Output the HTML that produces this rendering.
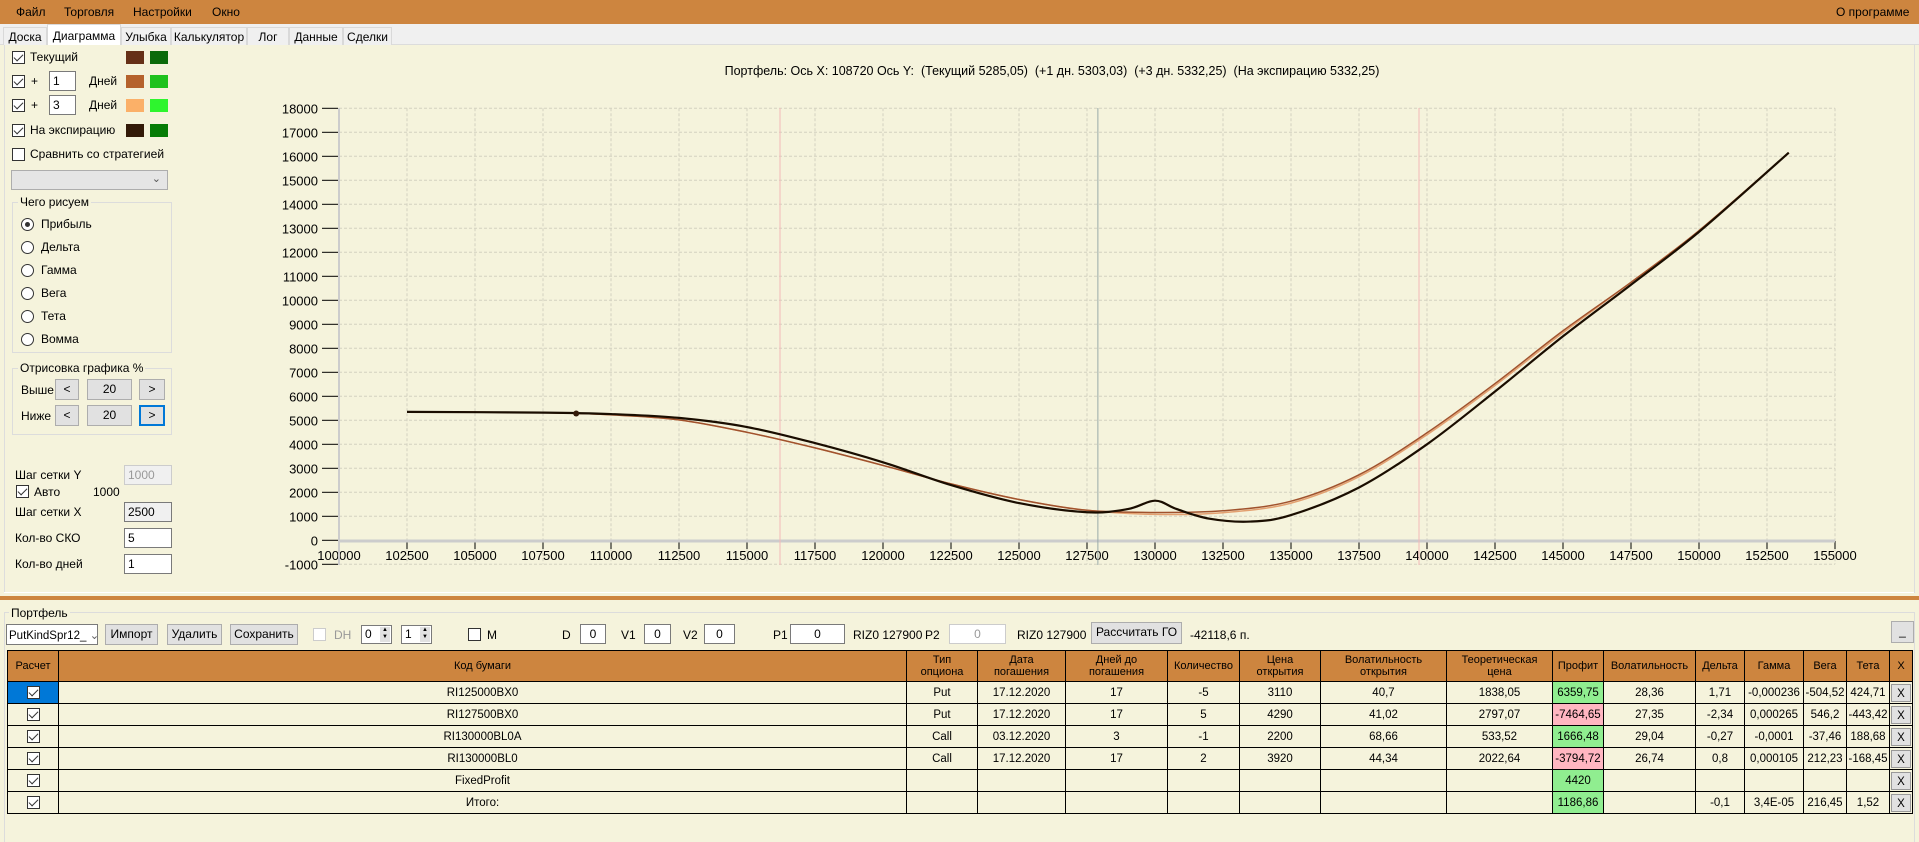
<!DOCTYPE html>
<html><head><meta charset="utf-8">
<style>
*{box-sizing:border-box}
body{margin:0;width:1919px;height:842px;overflow:hidden;background:#f5f3dc;font-family:"Liberation Sans",sans-serif;font-size:12px;color:#000;position:relative}
.a{position:absolute;white-space:nowrap}
.menu{left:0;top:0;width:1919px;height:24px;background:#cd853f}
.menu span{position:absolute;top:5px;font-size:12px}
.tabs{left:0;top:24px;width:1919px;height:21px;background:#f0f0f0;border-bottom:1px solid #dcdcdc}
.tab{position:absolute;top:3px;height:18px;border:1px solid #d9d9d9;border-bottom:none;background:#f0f0f0;font-size:12px;padding-top:2px;text-align:center}
.cb{position:absolute;width:13px;height:13px;border:1px solid #333;background:#fff}
.cb.c::after{content:"";position:absolute;left:3px;top:0px;width:4px;height:8px;border:solid #333;border-width:0 1.5px 1.5px 0;transform:rotate(45deg)}
.sw{position:absolute;width:18px;height:13px}
.tb{position:absolute;background:#fff;border:1px solid #7a7a7a;padding:2px 3px;font-size:12px}
.btn{position:absolute;background:#e1e1e1;border:1px solid #adadad;text-align:center;font-size:12px;line-height:19px}
.rad{position:absolute;width:13px;height:13px;border:1px solid #333;border-radius:50%;background:#fff}
.grp{position:absolute;border:1px solid #dcdcdc}
.grp>span{position:absolute;top:-8px;left:5px;background:#f5f3dc;padding:0 2px}
table{position:absolute;left:7px;top:650px;border-collapse:collapse;table-layout:fixed;font-size:11.5px}
td,th{border:1px solid #000;text-align:center;padding:0;overflow:hidden;white-space:nowrap}
th{background:#cd853f;font-weight:normal;height:31px;line-height:12px;font-size:11px}
td{height:22px;background:#f5f3dc}
.g{background:#90ee90}.p{background:#ffb6c1}
.x{background:#e1e1e1;border:1px solid #999;display:block;margin:1px;height:18px;line-height:18px}
.tcb{display:inline-block;width:13px;height:13px;border:1px solid #333;background:#fff;position:relative;vertical-align:middle}
.tcb::after{content:"";position:absolute;left:3px;top:0;width:4px;height:8px;border:solid #333;border-width:0 1.5px 1.5px 0;transform:rotate(45deg)}
</style></head><body>
<div class="a menu"><span style="left:16px">Файл</span><span style="left:64px">Торговля</span><span style="left:133px">Настройки</span><span style="left:212px">Окно</span><span style="left:1836px">О программе</span></div>
<div class="a tabs">
<div class="tab" style="left:3px;width:44px">Доска</div>
<div class="tab" style="left:47px;width:74px;top:0;height:21px;background:#fff;padding-top:4px">Диаграмма</div>
<div class="tab" style="left:121px;width:50px">Улыбка</div>
<div class="tab" style="left:171px;width:76px">Калькулятор</div>
<div class="tab" style="left:247px;width:42px">Лог</div>
<div class="tab" style="left:289px;width:54px">Данные</div>
<div class="tab" style="left:343px;width:49px">Сделки</div>
</div>
<div class="a" style="left:4px;top:45px;width:1px;height:548px;background:#ddd"></div>
<div class="a" style="left:4px;top:592px;width:1911px;height:1px;background:#fff"></div>
<div class="a" style="left:1914px;top:45px;width:1px;height:548px;background:#ddd"></div>
<div class="cb c" style="left:12px;top:51px"></div><div class="a" style="left:30px;top:50px">Текущий</div>
<div class="sw" style="left:126px;top:51px;background:#663018"></div><div class="sw" style="left:150px;top:51px;background:#0b6a0b"></div>
<div class="cb c" style="left:12px;top:75px"></div><div class="a" style="left:31px;top:74px">+</div>
<div class="tb" style="left:49px;top:71px;width:27px;height:20px">1</div><div class="a" style="left:89px;top:74px">Дней</div>
<div class="sw" style="left:126px;top:75px;background:#b5622c"></div><div class="sw" style="left:150px;top:75px;background:#1ec21e"></div>
<div class="cb c" style="left:12px;top:99px"></div><div class="a" style="left:31px;top:98px">+</div>
<div class="tb" style="left:49px;top:95px;width:27px;height:20px">3</div><div class="a" style="left:89px;top:98px">Дней</div>
<div class="sw" style="left:126px;top:99px;background:#fbb068"></div><div class="sw" style="left:150px;top:99px;background:#2ef52e"></div>
<div class="cb c" style="left:12px;top:124px"></div><div class="a" style="left:30px;top:123px">На экспирацию</div>
<div class="sw" style="left:126px;top:124px;background:#331a08"></div><div class="sw" style="left:150px;top:124px;background:#067c06"></div>
<div class="cb" style="left:12px;top:148px"></div><div class="a" style="left:30px;top:147px">Сравнить со стратегией</div>
<div class="a" style="left:11px;top:170px;width:157px;height:20px;background:#e5e5e5;border:1px solid #adadad"><span style="position:absolute;right:6px;top:1px;font-size:11px;color:#555">&#8964;</span></div>
<div class="grp" style="left:12px;top:202px;width:160px;height:151px"><span>Чего рисуем</span></div>
<div class="rad" style="left:21px;top:218px"><div style="position:absolute;left:3px;top:3px;width:5px;height:5px;border-radius:50%;background:#333"></div></div><div class="a" style="left:41px;top:217px">Прибыль</div>
<div class="rad" style="left:21px;top:241px"></div><div class="a" style="left:41px;top:240px">Дельта</div>
<div class="rad" style="left:21px;top:264px"></div><div class="a" style="left:41px;top:263px">Гамма</div>
<div class="rad" style="left:21px;top:287px"></div><div class="a" style="left:41px;top:286px">Вега</div>
<div class="rad" style="left:21px;top:310px"></div><div class="a" style="left:41px;top:309px">Тета</div>
<div class="rad" style="left:21px;top:333px"></div><div class="a" style="left:41px;top:332px">Вомма</div>
<div class="grp" style="left:12px;top:368px;width:160px;height:67px"><span>Отрисовка графика %</span></div>
<div class="a" style="left:21px;top:383px">Выше</div>
<div class="btn" style="left:55px;top:379px;width:24px;height:21px">&lt;</div>
<div class="btn" style="left:87px;top:379px;width:45px;height:21px">20</div>
<div class="btn" style="left:139px;top:379px;width:26px;height:21px">&gt;</div>
<div class="a" style="left:21px;top:409px">Ниже</div>
<div class="btn" style="left:55px;top:405px;width:24px;height:21px">&lt;</div>
<div class="btn" style="left:87px;top:405px;width:45px;height:21px">20</div>
<div class="btn" style="left:139px;top:405px;width:26px;height:21px;border:2px solid #0078d7;line-height:17px">&gt;</div>
<div class="a" style="left:15px;top:468px">Шаг сетки Y</div>
<div class="tb" style="left:124px;top:465px;width:48px;height:20px;background:#f0f0f0;border-color:#ccc;color:#999">1000</div>
<div class="cb c" style="left:16px;top:485px"></div><div class="a" style="left:34px;top:485px">Авто</div><div class="a" style="left:93px;top:485px">1000</div>
<div class="a" style="left:15px;top:505px">Шаг сетки X</div>
<div class="tb" style="left:124px;top:502px;width:48px;height:20px;background:#f0f0f0">2500</div>
<div class="a" style="left:15px;top:531px">Кол-во СКО</div>
<div class="tb" style="left:124px;top:528px;width:48px;height:20px">5</div>
<div class="a" style="left:15px;top:557px">Кол-во дней</div>
<div class="tb" style="left:124px;top:554px;width:48px;height:20px">1</div>
<div class="a" style="left:0;top:64px;width:2104px;text-align:center;font-size:12.5px">Портфель: Ось X: 108720 Ось Y: &nbsp;(Текущий 5285,05) &nbsp;(+1 дн. 5303,03) &nbsp;(+3 дн. 5332,25) &nbsp;(На экспирацию 5332,25)</div>
<svg class="a" style="left:0;top:0" width="1919" height="600" id="ch"></svg>
<div class="a" style="left:0;top:596px;width:1919px;height:4px;background:#cd853f"></div>
<div class="grp" style="left:4px;top:612px;width:1911px;height:230px;border-bottom:none"><span style="top:-7px;left:4px">Портфель</span></div>
<div class="a" style="left:6px;top:624px;width:92px;height:21px;background:#fff;border:1px solid #7a7a7a;padding:3px 2px;font-size:11.5px">PutKindSpr12_ <span style="color:#666">&#8964;</span></div>
<div class="btn" style="left:105px;top:624px;width:53px;height:21px">Импорт</div>
<div class="btn" style="left:167px;top:624px;width:55px;height:21px">Удалить</div>
<div class="btn" style="left:230px;top:624px;width:68px;height:21px">Сохранить</div>
<div class="cb" style="left:313px;top:628px;border-color:#ccc"></div><div class="a" style="left:334px;top:628px;color:#999">DH</div>
<div class="tb" style="left:361px;top:625px;width:31px;height:19px;padding:1px 3px">0<span style="position:absolute;right:1px;top:1px;width:10px;height:15px;background:#e1e1e1;font-size:6px;line-height:7px;text-align:center">▲<br>▼</span></div>
<div class="tb" style="left:401px;top:625px;width:31px;height:19px;padding:1px 3px">1<span style="position:absolute;right:1px;top:1px;width:10px;height:15px;background:#e1e1e1;font-size:6px;line-height:7px;text-align:center">▲<br>▼</span></div>
<div class="cb" style="left:468px;top:628px"></div><div class="a" style="left:487px;top:628px">M</div>
<div class="a" style="left:562px;top:628px">D</div><div class="tb" style="left:580px;top:624px;width:26px;height:20px;text-align:center">0</div>
<div class="a" style="left:621px;top:628px">V1</div><div class="tb" style="left:644px;top:624px;width:27px;height:20px;text-align:center">0</div>
<div class="a" style="left:683px;top:628px">V2</div><div class="tb" style="left:704px;top:624px;width:31px;height:20px;text-align:center">0</div>
<div class="a" style="left:773px;top:628px">P1</div><div class="tb" style="left:790px;top:624px;width:55px;height:20px;text-align:center">0</div>
<div class="a" style="left:853px;top:628px">RIZ0 127900</div>
<div class="a" style="left:925px;top:628px">P2</div><div class="tb" style="left:949px;top:624px;width:57px;height:20px;text-align:center;border-color:#ccc;color:#999">0</div>
<div class="a" style="left:1017px;top:628px">RIZ0 127900</div>
<div class="btn" style="left:1091px;top:622px;width:91px;height:22px">Рассчитать ГО</div>
<div class="a" style="left:1190px;top:628px">-42118,6 п.</div>
<div class="btn" style="left:1891px;top:621px;width:23px;height:22px">_</div>
<table>
<colgroup><col style="width:51px"><col style="width:848px"><col style="width:71px"><col style="width:88px"><col style="width:102px"><col style="width:72px"><col style="width:81px"><col style="width:126px"><col style="width:106px"><col style="width:51px"><col style="width:92px"><col style="width:49px"><col style="width:59px"><col style="width:43px"><col style="width:43px"><col style="width:23px"></colgroup>
<tr><th>Расчет</th><th>Код бумаги</th><th>Тип<br>опциона</th><th>Дата<br>погашения</th><th>Дней до<br>погашения</th><th>Количество</th><th>Цена<br>открытия</th><th>Волатильность<br>открытия</th><th>Теоретическая<br>цена</th><th>Профит</th><th>Волатильность</th><th>Дельта</th><th>Гамма</th><th>Вега</th><th>Тета</th><th>X</th></tr>
<tr><td style="background:#0078d7"><span class="tcb"></span></td><td>RI125000BX0</td><td>Put</td><td>17.12.2020</td><td>17</td><td>-5</td><td>3110</td><td>40,7</td><td>1838,05</td><td class="g">6359,75</td><td>28,36</td><td>1,71</td><td>-0,000236</td><td>-504,52</td><td>424,71</td><td><span class="x">X</span></td></tr>
<tr><td><span class="tcb"></span></td><td>RI127500BX0</td><td>Put</td><td>17.12.2020</td><td>17</td><td>5</td><td>4290</td><td>41,02</td><td>2797,07</td><td class="p">-7464,65</td><td>27,35</td><td>-2,34</td><td>0,000265</td><td>546,2</td><td>-443,42</td><td><span class="x">X</span></td></tr>
<tr><td><span class="tcb"></span></td><td>RI130000BL0A</td><td>Call</td><td>03.12.2020</td><td>3</td><td>-1</td><td>2200</td><td>68,66</td><td>533,52</td><td class="g">1666,48</td><td>29,04</td><td>-0,27</td><td>-0,0001</td><td>-37,46</td><td>188,68</td><td><span class="x">X</span></td></tr>
<tr><td><span class="tcb"></span></td><td>RI130000BL0</td><td>Call</td><td>17.12.2020</td><td>17</td><td>2</td><td>3920</td><td>44,34</td><td>2022,64</td><td class="p">-3794,72</td><td>26,74</td><td>0,8</td><td>0,000105</td><td>212,23</td><td>-168,45</td><td><span class="x">X</span></td></tr>
<tr><td><span class="tcb"></span></td><td>FixedProfit</td><td></td><td></td><td></td><td></td><td></td><td></td><td></td><td class="g">4420</td><td></td><td></td><td></td><td></td><td></td><td><span class="x">X</span></td></tr>
<tr><td><span class="tcb"></span></td><td>Итого:</td><td></td><td></td><td></td><td></td><td></td><td></td><td></td><td class="g">1186,86</td><td></td><td>-0,1</td><td>3,4E-05</td><td>216,45</td><td>1,52</td><td><span class="x">X</span></td></tr>
</table>
<script>
(function(){
var s=document.getElementById('ch'),h='';
function X(v){return 339+(v-100000)*0.0272}
function Y(p){return 540.3-p*0.024}
for(var p=-1000;p<=18000;p+=1000){var y=Y(p).toFixed(1);
 h+='<line x1="339" x2="1835" y1="'+y+'" y2="'+y+'" stroke="#d4d2c0" stroke-dasharray="3,2"/>';
 h+='<line x1="322" x2="338" y1="'+y+'" y2="'+y+'" stroke="#000"/>';
 h+='<text x="318" y="'+(+y+5)+'" text-anchor="end" font-size="13" font-family="Liberation Sans">'+p+'</text>';}
for(var v=100000;v<=155000;v+=2500){var x=X(v).toFixed(1);
 h+='<line x1="'+x+'" x2="'+x+'" y1="'+Y(18000)+'" y2="'+Y(-1000)+'" stroke="#d4d2c0" stroke-dasharray="3,2"/>';
 h+='<line x1="'+x+'" x2="'+x+'" y1="541" y2="549" stroke="#000"/>';
 h+='<text x="'+x+'" y="560" text-anchor="middle" font-size="13" font-family="Liberation Sans">'+v+'</text>';}
h+='<line x1="339" x2="339" y1="108" y2="565" stroke="#ccc" stroke-width="2"/>';
h+='<line x1="339" x2="1835" y1="541" y2="541" stroke="#ccc" stroke-width="3"/>';
h+='<line x1="'+X(127900)+'" x2="'+X(127900)+'" y1="108" y2="565" stroke="#9aa" stroke-width="1"/>';
h+='<line x1="780" x2="780" y1="108" y2="565" stroke="#f4b8b8"/>';
h+='<line x1="1419" x2="1419" y1="108" y2="565" stroke="#f4b8b8"/>';
function path(pts){var P=pts.map(function(q){return [X(q[0]),Y(q[1])]});var d='M'+P[0][0]+','+P[0][1];
 for(var i=0;i<P.length-1;i++){var p0=P[i-1]||P[i],p1=P[i],p2=P[i+1],p3=P[i+2]||p2;
 d+=' C'+(p1[0]+(p2[0]-p0[0])/6)+','+(p1[1]+(p2[1]-p0[1])/6)+' '+(p2[0]-(p3[0]-p1[0])/6)+','+(p2[1]-(p3[1]-p1[1])/6)+' '+p2[0]+','+p2[1];}
 return d;}
var br=[[102500,5350],[107500,5320],[110000,5230],[112500,5020],[115000,4500],[117500,3850],[120000,3120],[122500,2350],[125000,1700],[127500,1250],[130000,1080],[132500,1150],[135000,1550],[137500,2650],[140000,4400],[142500,6450],[145000,8650],[147500,10750],[150000,12900],[153300,16150]];
var bk=[[102500,5350],[107500,5320],[110000,5260],[112500,5100],[115000,4720],[117500,4050],[120000,3250],[122500,2300],[125000,1550],[127500,1170],[129000,1300],[130000,1650],[130800,1300],[132000,900],[133500,780],[135000,1050],[137500,2200],[140000,4000],[142500,6200],[145000,8500],[147500,10650],[150000,12850],[153300,16150]];
h+='<path d="'+path(br)+'" fill="none" stroke="#e3a070" stroke-width="1.5"/>';
h+='<path d="'+path(br.map(function(q){return [q[0],q[1]+(q[0]>128000&&q[0]<146000?80:0)]}))+'" fill="none" stroke="#a0522d" stroke-width="1.5"/>';
h+='<path d="'+path(bk)+'" fill="none" stroke="#1a0d00" stroke-width="2.2"/>';
h+='<circle cx="'+X(108720)+'" cy="'+Y(5285)+'" r="3" fill="#331a08"/>';
s.innerHTML=h;})();
</script>
</body></html>
